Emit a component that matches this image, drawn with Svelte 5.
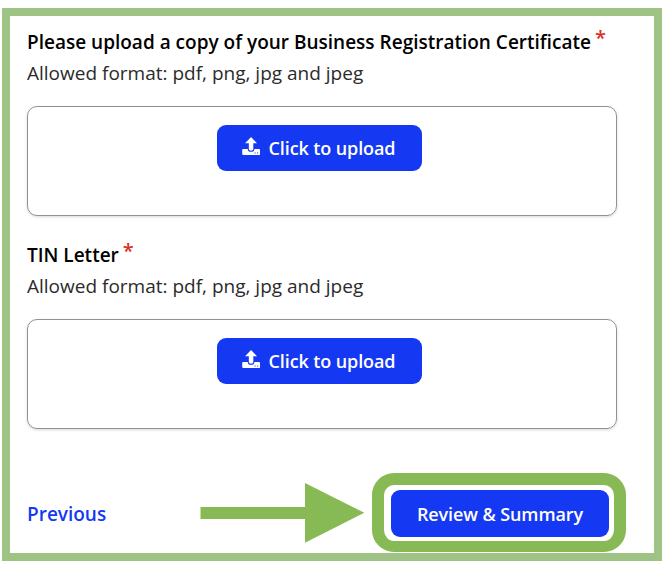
<script>
  const uploads = [
    { title: 'Please upload a copy of your Business Registration Certificate', cls: 'certificate' },
    { title: 'TIN Letter', cls: 'tin' }
  ];
</script>

<main class="frame">
  {#each uploads as u}
    <section class={u.cls}>
      <h2><span class="title">{u.title}</span><sup>*</sup></h2>
      <p><span>Allowed format: pdf, png, jpg and jpeg</span></p>
      <div class="drop">
        <button class="upload">
          <svg width="18.5" height="18.5" viewBox="0 0 19 19" fill="#fff">
            <path d="M9.3 0 L15.4 6.4 H11.6 V12.2 Q11.6 14 9.3 14 Q7 14 7 12.2 V6.4 H3.2 Z" />
            <path fill-rule="evenodd" d="M1.3 12.2 H5.9 Q5.9 15.2 9.3 15.2 Q12.7 15.2 12.7 12.2 H17.4 Q18.6 12.2 18.6 13.4 V17.3 Q18.6 18.5 17.4 18.5 H1.3 Q0.2 18.5 0.2 17.3 V13.4 Q0.2 12.2 1.3 12.2 Z M12.9 15.8 V16.9 H14 V15.8 Z M15.5 15.8 V16.9 H16.6 V15.8 Z" />
          </svg>
          <span>Click to upload</span>
        </button>
      </div>
    </section>
  {/each}

  <footer>
    <a href="#previous">Previous</a>
    <svg class="arrow" width="165" height="60" viewBox="0 0 165 60" fill="#87b955">
      <path d="M0.5 24 H105 V0 L164.3 29.8 L105 59.8 V36 H0.5 Z" />
    </svg>
    <div class="highlight">
      <button class="review"><span>Review &amp; Summary</span></button>
    </div>
  </footer>
</main>

<style>
  :global(body) {
    margin: 0;
    background: #fff;
  }
  .frame {
    box-sizing: border-box;
    width: 660px;
    height: 553px;
    margin: 8px 0 0 2px;
    border: 8px solid #9fc385;
    padding: 10px 28px 0 17px;
    display: flex;
    flex-direction: column;
    font-family: "Open Sans", "Noto Sans", sans-serif;
    font-size: 19px;
    color: #2b2b2b;
    white-space: nowrap;
  }
  section {
    width: 590px;
    height: 213px;
    flex: none;
  }
  h2 {
    display: flex;
    margin: 0;
    height: 32px;
    line-height: 32px;
    font-size: 19px;
    font-weight: 600;
    color: #000;
  }
  sup {
    margin-left: 4px;
    font-size: 20px;
    line-height: 24px;
    font-weight: 600;
    color: #d93025;
  }
  p {
    margin: 0;
    height: 31px;
    line-height: 31px;
  }
  .drop {
    box-sizing: border-box;
    margin-top: 17px;
    height: 110px;
    padding-top: 18px;
    border: 1px solid #929292;
    border-radius: 10px;
    box-shadow: 0 1px 3px rgba(0, 0, 0, 0.16);
    display: flex;
    justify-content: center;
    align-items: flex-start;
  }
  button {
    border: 0;
    padding: 0;
    background: #1539f2;
    color: #fff;
    font: 600 18px/46px "Open Sans", "Noto Sans", sans-serif;
    letter-spacing: -0.1px;
    white-space: nowrap;
  }
  .upload {
    display: flex;
    align-items: flex-start;
    width: 205px;
    height: 46px;
    margin-right: 5px;
    padding-left: 24px;
    border-radius: 9px;
  }
  .upload svg {
    flex: none;
    margin: 12px 8.5px 0 0.5px;
  }
  footer {
    display: flex;
    align-items: flex-start;
    margin-top: 21px;
  }
  a {
    width: 173px;
    margin-top: 25px;
    line-height: 32px;
    font-weight: 600;
    color: #1539f2;
    text-decoration: none;
  }
  .arrow {
    flex: none;
    margin-top: 10px;
  }
  .highlight {
    box-sizing: border-box;
    flex: none;
    width: 254px;
    height: 79px;
    margin-left: 7px;
    border: 12px solid #87b955;
    border-bottom-width: 11px;
    border-radius: 22px;
    padding: 5px 5px 0 7px;
  }
  .review {
    display: block;
    width: 218px;
    height: 47px;
    border-radius: 9px;
  }
</style>
